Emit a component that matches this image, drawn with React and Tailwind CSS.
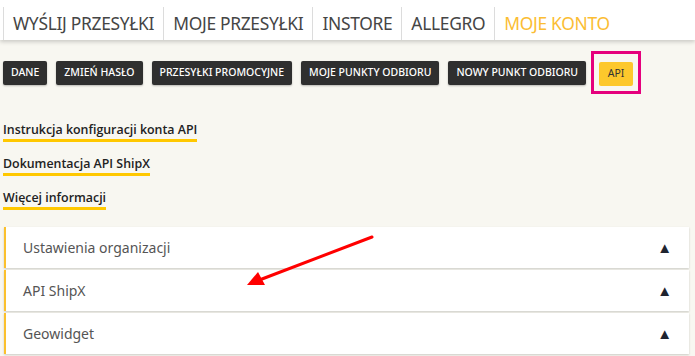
import React from 'react';

const navItems = ['WYŚLIJ PRZESYŁKI', 'MOJE PRZESYŁKI', 'INSTORE', 'ALLEGRO', 'MOJE KONTO'];
const tabs = ['DANE', 'ZMIEŃ HASŁO', 'PRZESYŁKI PROMOCYJNE', 'MOJE PUNKTY ODBIORU', 'NOWY PUNKT ODBIORU'];
const links = ['Instrukcja konfiguracji konta API', 'Dokumentacja API ShipX', 'Więcej informacji'];
const sections = ['Ustawienia organizacji', 'API ShipX', 'Geowidget'];

function App() {
  return (
    <div className="relative min-h-[356px] w-full bg-[#f8f7f1] overflow-hidden" style={{ fontFamily: '"Noto Sans", sans-serif' }}>
      {/* top nav */}
      <div className="h-[40px] bg-white shadow-[0_2px_4px_rgba(0,0,0,0.18)] flex items-end">
        {navItems.map((item, i) => (
          <div
            key={item}
            className={`h-[33px] flex items-center px-[9px] border-l border-[#dcdcdc] text-[17.4px] tracking-[-0.3px] ${i === 0 ? 'ml-[3px]' : ''} ${item === 'MOJE KONTO' ? 'text-[#fbbd33]' : 'text-[#454545]'}`}
          >
            {item}
          </div>
        ))}
      </div>

      {/* tabs */}
      <div className="flex items-center gap-[9px] pl-[3px] mt-[12px] h-[41px]">
        {tabs.map(t => (
          <button
            key={t}
            className="h-[24px] px-[8px] bg-[#2f2f2f] text-white text-[10.5px] font-medium rounded-[2px] shadow-[0_1px_2px_rgba(0,0,0,0.25)] whitespace-nowrap"
          >
            {t}
          </button>
        ))}
        <div className="border-[3px] border-[#e5007d] p-[5px] -ml-[4px]">
          <button className="h-[24px] w-[34px] bg-[#fdc82c] text-[#333] text-[10.5px] rounded-[2px]">API</button>
        </div>
      </div>

      {/* links */}
      <div className="flex flex-col items-start pl-[3px] mt-[28px] gap-[13px]" style={{ fontFamily: '"Open Sans", sans-serif' }}>
        {links.map(l => (
          <a key={l} className="text-[12.4px] font-semibold text-[#222] leading-[17px] border-b-[3px] border-[#ffc800] pb-[1px]">
            {l}
          </a>
        ))}
      </div>

      {/* accordion */}
      <div className="flex flex-col gap-[2px] pl-[4px] pr-[6px] mt-[17px]">
        {sections.map(s => (
          <div key={s} className="h-[41px] bg-white border-l-2 border-[#fbc02d] shadow-[0_1px_2px_rgba(0,0,0,0.18)] flex items-center justify-between pl-[17px] pr-[17px]">
            <span className="text-[14px] text-[#555]">{s}</span>
            <span className="text-[15px] leading-none text-[#1f2430]">▲</span>
          </div>
        ))}
      </div>

      {/* red annotation arrow */}
      <svg className="absolute left-0 top-0 pointer-events-none" width="695" height="356">
        <line x1="372" y1="237" x2="262" y2="279" stroke="#ff0000" strokeWidth="3" strokeLinecap="round" />
        <polygon points="247,285 258,272 265,285" fill="#ff0000" />
      </svg>
    </div>
  );
}

export default App;
